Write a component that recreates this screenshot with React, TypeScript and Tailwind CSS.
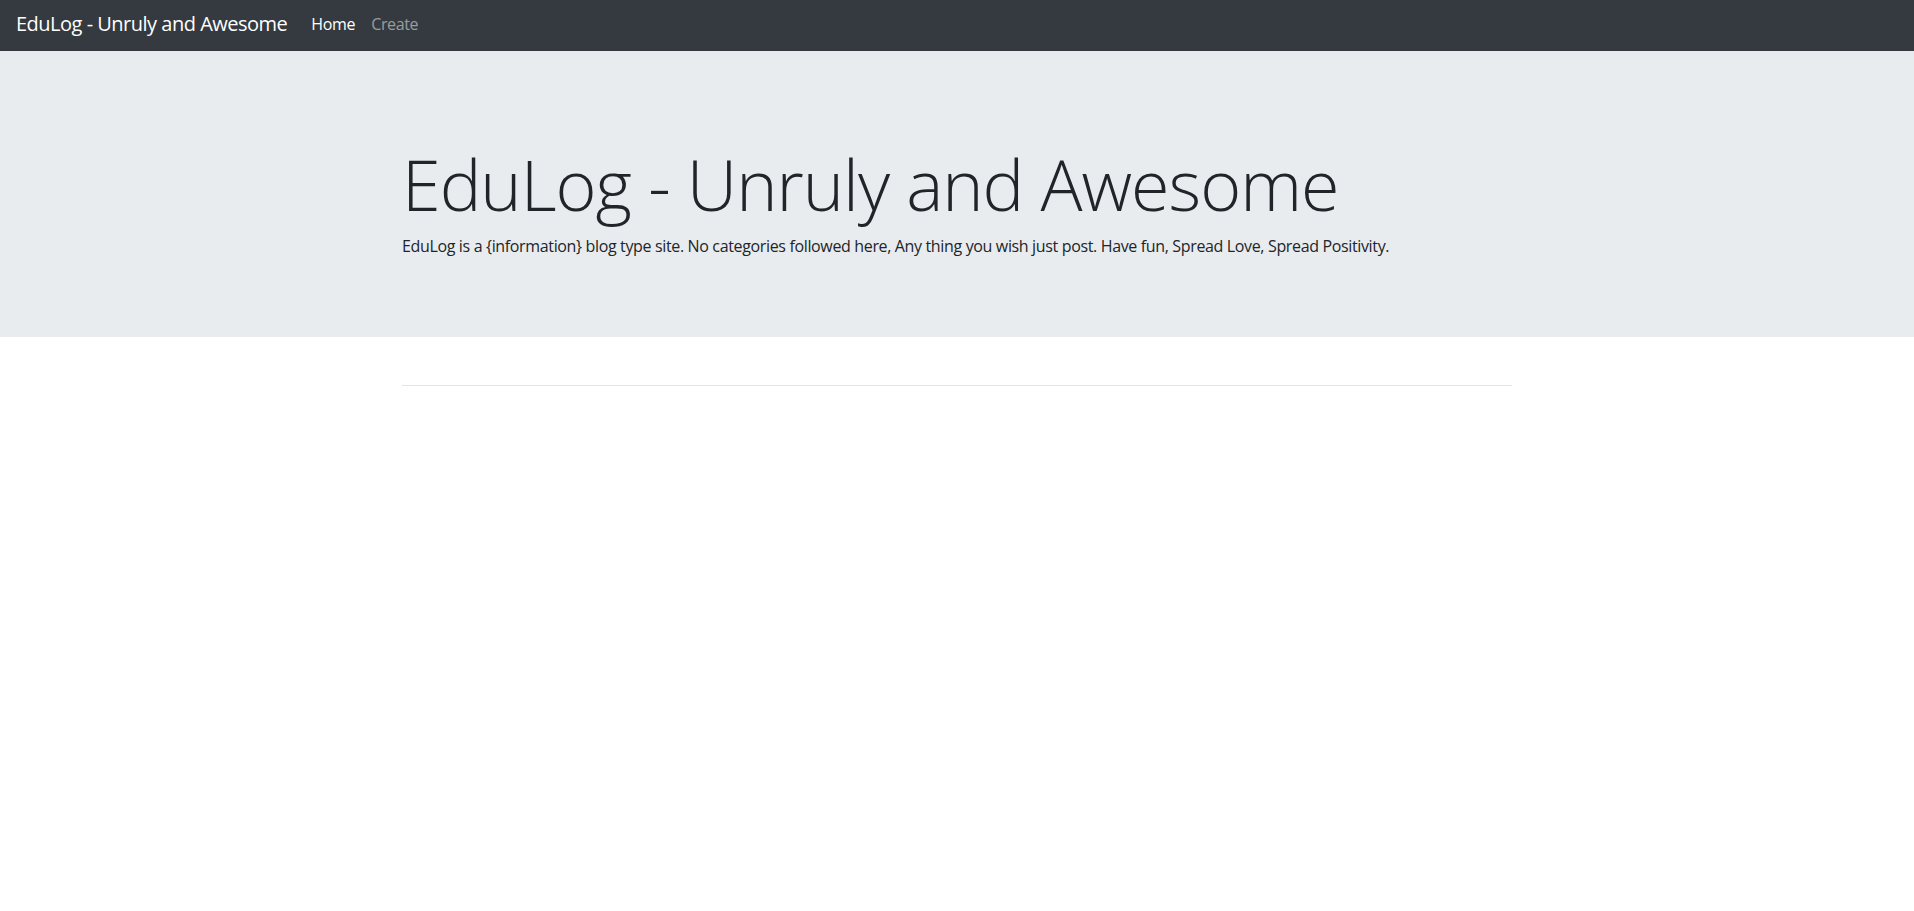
export default function App() {
  return (
    <div className="min-h-screen bg-white text-[#212529] font-['Segoe_UI','Open_Sans',sans-serif]">
      {/* Navbar */}
      <nav className="h-[51px] bg-[#343a40] flex items-center px-4 pb-1">
        <a href="#" className="text-white text-[20px] leading-[30px] tracking-[-0.5px] mr-4">
          EduLog - Unruly and Awesome
        </a>
        <ul className="flex">
          <li>
            <a href="#" className="block px-2 text-white text-base leading-6 tracking-[-0.35px]">
              Home
            </a>
          </li>
          <li>
            <a href="#" className="block px-2 text-white/50 text-base leading-6 tracking-[-0.35px]">
              Create
            </a>
          </li>
        </ul>
      </nav>

      {/* Jumbotron */}
      <div className="h-[286px] bg-[#e9ecef] pt-[91px]">
        <div className="w-[1140px] mx-auto px-[15px]">
          <h1 className="text-[70px] leading-[1.2] font-light tracking-[-1px]">EduLog - Unruly and Awesome</h1>
          <p className="mt-[8px] text-base leading-6 tracking-[-0.35px]">
            EduLog is a {"{information}"} blog type site. No categories followed here, Any thing you wish just post. Have fun, Spread Love, Spread Positivity.
          </p>
        </div>
      </div>

      <div className="w-[1140px] mx-auto px-[15px]">
        <hr className="mt-12 border-t border-black/10" />
      </div>
    </div>
  );
}
